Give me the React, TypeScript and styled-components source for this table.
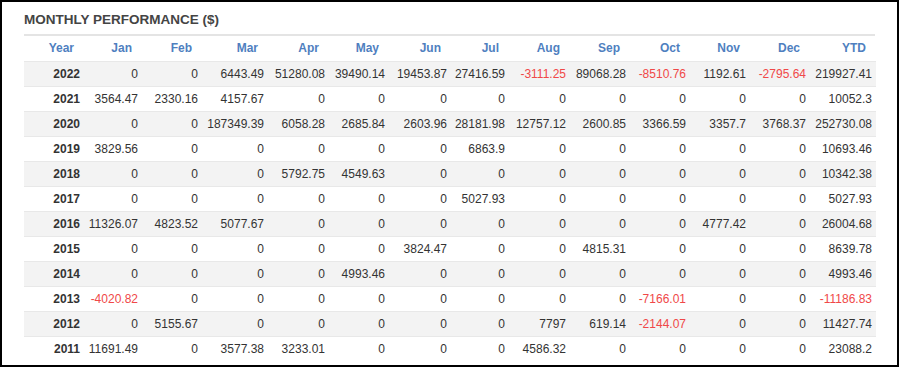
import React from 'react';
import styled, { createGlobalStyle } from 'styled-components';

const GlobalStyle = createGlobalStyle`
  html, body {
    margin: 0;
    padding: 0;
    background: #fff;
  }
  body {
    font-family: 'Liberation Sans', Arial, sans-serif;
  }
`;

const months = ['Jan', 'Feb', 'Mar', 'Apr', 'May', 'Jun', 'Jul', 'Aug', 'Sep', 'Oct', 'Nov', 'Dec'];
const colWidths = [60, 58, 60, 66, 61, 60, 62, 58, 61, 60, 60, 60, 60, 66];

const rows: { year: number; values: number[] }[] = [
  { year: 2022, values: [0, 0, 6443.49, 51280.08, 39490.14, 19453.87, 27416.59, -3111.25, 89068.28, -8510.76, 1192.61, -2795.64, 219927.41] },
  { year: 2021, values: [3564.47, 2330.16, 4157.67, 0, 0, 0, 0, 0, 0, 0, 0, 0, 10052.3] },
  { year: 2020, values: [0, 0, 187349.39, 6058.28, 2685.84, 2603.96, 28181.98, 12757.12, 2600.85, 3366.59, 3357.7, 3768.37, 252730.08] },
  { year: 2019, values: [3829.56, 0, 0, 0, 0, 0, 6863.9, 0, 0, 0, 0, 0, 10693.46] },
  { year: 2018, values: [0, 0, 0, 5792.75, 4549.63, 0, 0, 0, 0, 0, 0, 0, 10342.38] },
  { year: 2017, values: [0, 0, 0, 0, 0, 0, 5027.93, 0, 0, 0, 0, 0, 5027.93] },
  { year: 2016, values: [11326.07, 4823.52, 5077.67, 0, 0, 0, 0, 0, 0, 0, 4777.42, 0, 26004.68] },
  { year: 2015, values: [0, 0, 0, 0, 0, 3824.47, 0, 0, 4815.31, 0, 0, 0, 8639.78] },
  { year: 2014, values: [0, 0, 0, 0, 4993.46, 0, 0, 0, 0, 0, 0, 0, 4993.46] },
  { year: 2013, values: [-4020.82, 0, 0, 0, 0, 0, 0, 0, 0, -7166.01, 0, 0, -11186.83] },
  { year: 2012, values: [0, 5155.67, 0, 0, 0, 0, 0, 7797, 619.14, -2144.07, 0, 0, 11427.74] },
  { year: 2011, values: [11691.49, 0, 3577.38, 3233.01, 0, 0, 0, 4586.32, 0, 0, 0, 0, 23088.2] },
];

export default function App() {
  return (
    <>
      <GlobalStyle />
      <Frame>
        <Title>Monthly Performance ($)</Title>
        <Table>
          <colgroup>
            {colWidths.map((w, i) => (
              <Col key={i} $w={w} />
            ))}
          </colgroup>
          <thead>
            <tr>
              <HeadCell>Year</HeadCell>
              {months.map((m) => (
                <HeadCell key={m}>{m}</HeadCell>
              ))}
              <HeadCell>YTD</HeadCell>
            </tr>
          </thead>
          <tbody>
            {rows.map((row, i) => (
              <Row key={row.year} $striped={i % 2 === 0}>
                <YearCell>{row.year}</YearCell>
                {row.values.map((v, j) => (
                  <ValueCell key={j} $negative={v < 0}>
                    {v}
                  </ValueCell>
                ))}
              </Row>
            ))}
          </tbody>
        </Table>
      </Frame>
    </>
  );
}

const Frame = styled.div`
  width: 899px;
  height: 367px;
  box-sizing: border-box;
  border: 2px solid #000;
  padding: 10px 22px 0 22px;
  overflow: hidden;
`;

const Title = styled.h2`
  margin: 0;
  padding: 0 0 7px 0;
  font-size: 13.5px;
  line-height: 15px;
  font-weight: bold;
  text-transform: uppercase;
  color: #444;
  border-bottom: 2px solid #e4e4e4;
`;

const Table = styled.table`
  width: 852px;
  table-layout: fixed;
  border-collapse: collapse;
  font-size: 12px;
  color: #333;
`;

const Col = styled.col<{ $w: number }>`
  width: ${(p) => p.$w}px;
`;

const HeadCell = styled.th`
  height: 25px;
  padding: 0 10px 0 0;
  text-align: right;
  font-weight: bold;
  color: #4f7fbf;
  line-height: 25px;
`;

const Row = styled.tr<{ $striped: boolean }>`
  background: ${(p) => (p.$striped ? '#f3f3f3' : '#fff')};
`;

const ValueCell = styled.td<{ $negative: boolean }>`
  height: 24px;
  padding: 0 4px 0 0;
  line-height: 24px;
  text-align: right;
  white-space: nowrap;
  border-top: 1px solid #e8e8e8;
  color: ${(p) => (p.$negative ? '#f04848' : '#333')};
`;

const YearCell = styled(ValueCell).attrs({ $negative: false })`
  font-weight: bold;
  padding-right: 4px;
`;
